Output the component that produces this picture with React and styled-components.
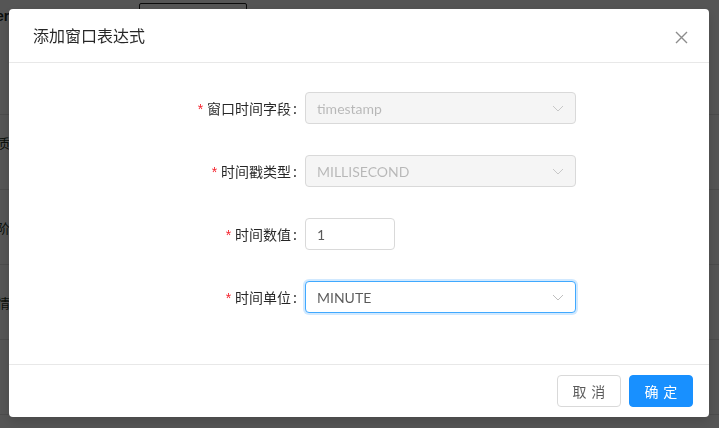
import React from "react";
import styled, { createGlobalStyle } from "styled-components";

const Global = createGlobalStyle`
  html, body { margin: 0; padding: 0; }
  body {
    font-family: Lato, "Noto Sans CJK SC", sans-serif;
    font-size: 14px;
    color: rgba(0,0,0,0.65);
    overflow: hidden;
  }
`;

const Page = styled.div`
  width: 719px;
  height: 428px;
  background: #fff;
  display: flex;
  flex-direction: column;
  overflow: hidden;
`;

const TopBar = styled.div`
  height: 40px;
  display: flex;
  align-items: flex-start;
`;

const TopText = styled.span`
  font-family: "Liberation Sans", sans-serif;
  font-weight: bold;
  font-size: 14px;
  line-height: 16px;
  color: #1f2a1f;
  margin: 8px 0 0 -4px;
  width: 143px;
`;

const TopBox = styled.div`
  margin-top: 3px;
  width: 106px;
  height: 30px;
  border: 1px solid #222;
  border-radius: 2px;
`;

const BgRow = styled.div`
  height: 75px;
  flex: none;
  box-sizing: border-box;
  border-bottom: 1px solid #e2e2e2;
  display: flex;
  align-items: flex-start;
  padding-top: ${(p) => p.$top || 0}px;
`;

const BgLabel = styled.span`
  font-family: "Noto Sans CJK SC", sans-serif;
  font-size: 13px;
  line-height: 20px;
  color: #223322;
  margin-left: -3px;
`;

const Mask = styled.div`
  position: fixed;
  inset: 0;
  background: rgba(0, 0, 0, 0.665);
`;

const Wrap = styled.div`
  position: fixed;
  inset: 0;
  padding: 9px;
  display: flex;
  align-items: flex-start;
`;

const Modal = styled.div`
  width: 700px;
  background: #fff;
  border-radius: 4px;
  box-shadow: 0 4px 12px rgba(0, 0, 0, 0.15);
  display: flex;
  flex-direction: column;
  position: relative;
`;

const Header = styled.div`
  padding: 15px 24px 16px;
  border-bottom: 1px solid #e8e8e8;
`;

const Title = styled.div`
  font-family: "Noto Sans CJK SC", sans-serif;
  font-size: 16px;
  line-height: 22px;
  color: rgba(0, 0, 0, 0.85);
`;

const Close = styled.button`
  position: absolute;
  top: 0;
  right: 0;
  width: 56px;
  height: 56px;
  border: 0;
  background: transparent;
  display: flex;
  align-items: center;
  justify-content: center;
  padding: 0;
  cursor: pointer;
`;

const Body = styled.div`
  padding: 29px 24px 51px;
  display: flex;
  flex-direction: column;
  gap: 31px;
`;

const Row = styled.div`
  display: grid;
  grid-template-columns: 272px 271px;
  align-items: center;
  height: 32px;
`;

const Label = styled.label`
  display: flex;
  justify-content: flex-end;
  align-items: center;
  font-family: "Noto Sans CJK SC", sans-serif;
  font-size: 14px;
  color: rgba(0, 0, 0, 0.85);
  white-space: nowrap;
`;

const Star = styled.span`
  color: #f5222d;
  font-family: "Liberation Sans", sans-serif;
  font-size: 14px;
  margin-right: 4px;
  position: relative;
  top: 1px;
`;

const Colon = styled.span`
  margin: 0 8px 0 2px;
`;

const Field = styled.div`
  box-sizing: border-box;
  width: ${(p) => p.$w || "271px"};
  height: 32px;
  border: 1px solid ${(p) => (p.$focus ? "#40a9ff" : "#d9d9d9")};
  box-shadow: ${(p) => (p.$focus ? "0 0 0 2px rgba(24,144,255,0.2)" : "none")};
  background: ${(p) => (p.$disabled ? "#f5f5f5" : "#fff")};
  border-radius: 4px;
  display: flex;
  align-items: center;
  justify-content: space-between;
  padding: 0 11px;
  font-size: 14px;
  color: ${(p) => (p.$disabled ? "rgba(0,0,0,0.25)" : "rgba(0,0,0,0.65)")};
`;

const Footer = styled.div`
  border-top: 1px solid #e8e8e8;
  padding: 10px 16px;
  display: flex;
  justify-content: flex-end;
  gap: 8px;
`;

const Button = styled.button`
  box-sizing: border-box;
  width: 64px;
  height: 32px;
  border-radius: 4px;
  border: 1px solid ${(p) => (p.$primary ? "#1890ff" : "#d9d9d9")};
  background: ${(p) => (p.$primary ? "#1890ff" : "#fff")};
  color: ${(p) => (p.$primary ? "#fff" : "rgba(0,0,0,0.65)")};
  font-family: "Noto Sans CJK SC", sans-serif;
  font-size: 14px;
  letter-spacing: 0.34em;
  padding: 0 0 0 0.34em;
  cursor: pointer;
`;

const Chevron = ({ light }) => (
  <svg width="12" height="12" viewBox="0 0 12 12">
    <path d="M1 4 L6 9 L11 4" fill="none" stroke={light ? "#c8c8c8" : "#bfbfbf"} strokeWidth="1" />
  </svg>
);

const X = () => (
  <svg width="13" height="13" viewBox="0 0 13 13">
    <path d="M1 1 L12 12 M12 1 L1 12" stroke="rgba(0,0,0,0.45)" strokeWidth="1.4" />
  </svg>
);

const items = [
  { label: "窗口时间字段", value: "timestamp", select: true, disabled: true },
  { label: "时间戳类型", value: "MILLISECOND", select: true, disabled: true },
  { label: "时间数值", value: "1", width: "90px" },
  { label: "时间单位", value: "MINUTE", select: true, focus: true },
];

export default function App() {
  return (
    <>
      <Global />
      <Page>
        <TopBar>
          <TopText>er</TopText>
          <TopBox />
        </TopBar>
        <BgRow />
        <BgRow $top={18}><BgLabel>质</BgLabel></BgRow>
        <BgRow $top={28}><BgLabel>阶</BgLabel></BgRow>
        <BgRow $top={28}><BgLabel>情</BgLabel></BgRow>
        <BgRow />
      </Page>
      <Mask />
      <Wrap>
        <Modal>
          <Header>
            <Title>添加窗口表达式</Title>
          </Header>
          <Close aria-label="close"><X /></Close>
          <Body>
            {items.map((it) => (
              <Row key={it.label}>
                <Label>
                  <Star>*</Star>
                  {it.label}
                  <Colon>:</Colon>
                </Label>
                <Field $w={it.width} $disabled={it.disabled} $focus={it.focus}>
                  <span>{it.value}</span>
                  {it.select && <Chevron light={it.disabled} />}
                </Field>
              </Row>
            ))}
          </Body>
          <Footer>
            <Button>取消</Button>
            <Button $primary>确定</Button>
          </Footer>
        </Modal>
      </Wrap>
    </>
  );
}
